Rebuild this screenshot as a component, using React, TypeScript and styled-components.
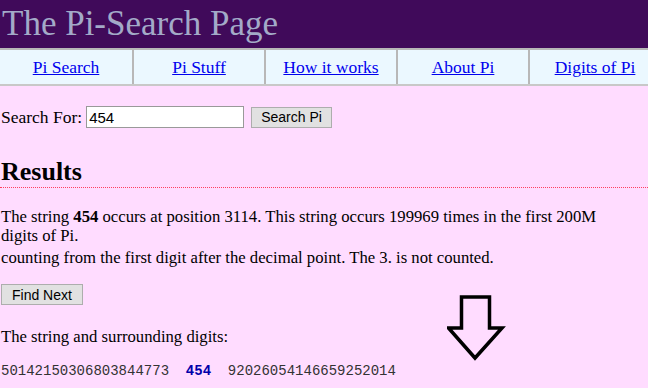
import styled, { createGlobalStyle } from "styled-components";

const GlobalStyle = createGlobalStyle`
  html, body {
    margin: 0;
    padding: 0;
    background: #ffdcff;
    font-family: "Liberation Serif", "Times New Roman", serif;
    font-size: 16.7px;
    color: #000;
  }
`;

const navItems = ["Pi Search", "Pi Stuff", "How it works", "About Pi", "Digits of Pi"];

const App = () => {
  return (
    <Page>
      <GlobalStyle />
      <Header>The Pi-Search Page</Header>
      <Nav>
        {navItems.map((item) => (
          <NavCell key={item}>
            <NavLink href="#">{item}</NavLink>
          </NavCell>
        ))}
      </Nav>

      <Content>
        <SearchForm onSubmit={(e) => e.preventDefault()}>
          <Label>Search For:</Label>
          <SearchInput defaultValue="454" />
          <GrayButton type="submit">Search Pi</GrayButton>
        </SearchForm>

        <Title>Results</Title>
        <Divider />

        <ResultText>
          The string <b>454</b> occurs at position 3114. This string occurs 199969 times in the first 200M
          <br />
          digits of Pi.
        </ResultText>
        <Note>counting from the first digit after the decimal point. The 3. is not counted.</Note>

        <NextButton type="button">Find Next</NextButton>

        <Caption>The string and surrounding digits:</Caption>
        <Digits>
          {"50142150306803844773  "}
          <Match>454</Match>
          {"  92026054146659252014"}
        </Digits>
      </Content>

      <Arrow width="60" height="70" viewBox="0 0 60 70">
        <path
          d="M14.5 2 H42.5 V33 H55 L28 63 L1.5 33 H14.5 Z"
          fill="none"
          stroke="#000"
          strokeWidth="3.5"
          strokeLinejoin="miter"
        />
      </Arrow>
    </Page>
  );
};

const Page = styled.div`
  position: relative;
  width: 648px;
  height: 388px;
  overflow: hidden;
`;

const Header = styled.div`
  height: 48px;
  background: #400a5a;
  color: #a3aac8;
  font-size: 35px;
  line-height: 48px;
  padding-left: 2px;
  white-space: nowrap;
`;

const Nav = styled.div`
  display: flex;
  width: 660px;
  height: 34px;
  background: #ebf8ff;
  border-top: 2px solid #b8b8b8;
  border-bottom: 2px solid #c8c8c8;
`;

const NavCell = styled.div`
  flex: 0 0 132px;
  display: flex;
  align-items: center;
  justify-content: center;
  border-left: 2px solid #b8b8b8;
  box-sizing: border-box;

  &:first-child {
    border-left: none;
  }
`;

const NavLink = styled.a`
  color: #0000ee;
  text-decoration: underline;
  font-size: 17.5px;
`;

const Content = styled.div`
  padding: 19px 1px 0;
`;

const SearchForm = styled.form`
  display: flex;
  align-items: center;
  gap: 5px;
  margin: 0;
  height: 24px;
`;

const Label = styled.span`
  font-size: 17.5px;
  margin-right: -1px;
`;

const SearchInput = styled.input`
  width: 152px;
  height: 18px;
  border: 1px solid #999;
  padding: 1px 2px;
  font-family: "Liberation Sans", Arial, sans-serif;
  font-size: 15px;
  background: #fff;
  outline: none;
`;

const GrayButton = styled.button`
  height: 21px;
  margin-left: 2px;
  padding: 0 9px;
  background: #e1e1e1;
  border: 1px solid #adadad;
  font-family: "Liberation Sans", Arial, sans-serif;
  font-size: 14px;
  color: #000;
`;

const Title = styled.h2`
  margin: 29px 0 0;
  font-size: 26px;
  font-weight: bold;
  line-height: 28px;
`;

const Divider = styled.div`
  margin: 1px -1px 0;
  border-top: 1px dotted #ff4060;
`;

const ResultText = styled.p`
  margin: 19px 0 0;
  line-height: 19px;
`;

const Note = styled.p`
  margin: 3px 0 0;
  line-height: 19px;
`;

const NextButton = styled(GrayButton)`
  display: block;
  margin: 17px 0 0 0;
  padding: 0 10px;
`;

const Caption = styled.p`
  margin: 22px 0 0;
  line-height: 19px;
`;

const Digits = styled.pre`
  margin: 17px 0 0;
  font-family: "Liberation Mono", "Courier New", monospace;
  font-size: 14px;
  line-height: 17px;
  color: #333;
`;

const Match = styled.b`
  color: #0000aa;
`;

const Arrow = styled.svg`
  position: absolute;
  left: 447px;
  top: 295px;
`;

export default App;
